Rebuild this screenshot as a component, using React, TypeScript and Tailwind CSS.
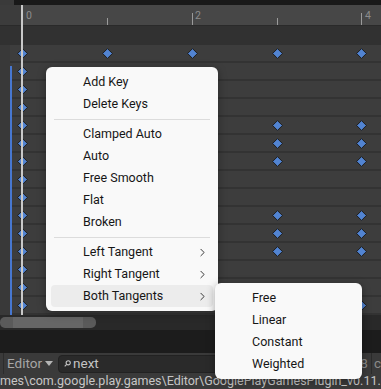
import { ChevronRight } from 'lucide-react'

const FONT = "Roboto, 'Noto Sans', sans-serif"

// key columns on the curve canvas (x, px)
const COLS = [22, 107, 192, 277, 361]

// which extra columns (besides the playhead column) carry keys in each row
const ROWS: number[][] = [
  [107, 192, 277, 361],
  [], [], [],
  [277, 361], [277, 361], [277, 361],
  [], [],
  [277, 361], [277, 361], [277, 361],
  [], [],
  [277, 361],
]

function Key({ x }: { x: number }) {
  return (
    <svg
      width="11"
      height="11"
      viewBox="0 0 11 11"
      className="absolute top-[3px]"
      style={{ left: x - 5.5 }}
    >
      <polygon points="5.5,0.6 10.4,5.5 5.5,10.4 0.6,5.5" fill="#5284d2" stroke="#1c1c1c" strokeWidth="1" />
    </svg>
  )
}

function MenuItem({ label, sub, active }: { label: string; sub?: boolean; active?: boolean }) {
  return (
    <div
      className={`mx-[5px] h-[22px] rounded-[4px] flex items-center pl-[32px] pr-[4px] ${active ? 'bg-[#ececec]' : ''}`}
    >
      <span className="flex-1 text-[12.5px] text-[#161616] leading-none">{label}</span>
      {sub && <ChevronRight size={13} strokeWidth={1.7} className="text-[#2a2a2a]" />}
    </div>
  )
}

function Sep() {
  return (
    <div className="h-[8px] flex items-center px-[8px]">
      <div className="h-px flex-1 bg-[#dcdcdc]" />
    </div>
  )
}

export default function App() {
  return (
    <div
      className="w-[381px] h-[389px] relative overflow-hidden bg-[#383838] flex flex-col"
      style={{ fontFamily: FONT }}
    >
      {/* top strip */}
      <div className="h-[5px] flex">
        <div className="w-[14px] bg-[#3a3a3a]" />
        <div className="flex-1 bg-[#191919]" />
      </div>

      {/* time ruler */}
      <div className="h-[21px] flex border-b border-[#2a2a2a]">
        <div className="w-[22px] bg-[#3c3c3c]" />
        <div className="flex-1 bg-[#474747] relative text-[10.5px] text-[#8c8c8c] leading-none">
          <div className="absolute left-[85px] top-[13px] w-px h-[7px] bg-[#9a9a9a]" />
          <div className="absolute left-[170px] top-[8px] w-px h-[12px] bg-[#9a9a9a]" />
          <div className="absolute left-[255px] top-[13px] w-px h-[7px] bg-[#9a9a9a]" />
          <div className="absolute left-[339px] top-[8px] w-px h-[12px] bg-[#9a9a9a]" />
          <span className="absolute left-[4px] top-[6px]">0</span>
          <span className="absolute left-[173px] top-[6px]">2</span>
          <span className="absolute left-[343px] top-[6px]">4</span>
        </div>
      </div>

      {/* header band */}
      <div className="h-[19px] bg-[#313131]" />

      {/* curve rows */}
      <div className="relative">
        {COLS.slice(3).map(x => (
          <div key={x} className="absolute top-[10px] bottom-0 w-px bg-[#5a5a5a]" style={{ left: x }} />
        ))}
        {COLS.slice(1, 3).map(x => (
          <div key={x} className="absolute top-[10px] h-[12px] w-px bg-[#5a5a5a]" style={{ left: x }} />
        ))}
        {ROWS.map((keys, i) => (
          <div key={i} className="relative h-[18px] flex">
            <div className="w-[10px] bg-[#393939]" />
            <div className="flex-1 bg-[#3d3d3d] border-b-2 border-[#333333]" />
            <Key x={22} />
            {keys.map(x => <Key key={x} x={x} />)}
          </div>
        ))}
        <div className="absolute left-[10px] top-[21px] bottom-0 w-[2px] bg-[#4777d0]" />
        <div className="absolute left-[21px] -top-[40px] bottom-0 w-[2px] bg-[#c9c9c9]" />
      </div>

      {/* horizontal scrollbar */}
      <div className="h-[15px] bg-[#292929] pt-[2px]">
        <div className="w-[96px] h-[11px] rounded-[5px] bg-[#5a5a5a] flex px-[13px]">
          <div className="flex-1 bg-[#666666]" />
        </div>
      </div>

      <div className="h-[23px] bg-[#1c1c1c]" />

      {/* console toolbar */}
      <div className="h-[21px] bg-[#3a3a3a] flex items-center text-[13.5px] text-[#a6a6a6]">
        <div className="w-px h-full bg-[#2c2c2c] ml-[3px]" />
        <span className="ml-[3px]">Editor</span>
        <svg width="8" height="5" viewBox="0 0 8 5" className="ml-[3px]">
          <polygon points="0,0 8,0 4,5" fill="#b5b5b5" />
        </svg>
        <div className="ml-[5px] flex-1 h-[18px] rounded-[4px] bg-[#2a2a2a] border border-[#222] flex items-center pl-[5px] text-[#c4c4c4]">
          <svg width="7" height="7" viewBox="0 0 8 8" fill="none" stroke="#c4c4c4" strokeWidth="1.3">
            <circle cx="4.8" cy="3.2" r="2.4" />
            <path d="M3 5 L0.8 7.2" />
          </svg>
          <span className="ml-[2px]">next</span>
        </div>
        <span className="ml-[3px] text-[#8a8a8a]">8</span>
        <div className="w-px h-full bg-[#2c2c2c] ml-[3px] mr-[2px]" />
        <span className="text-[#8a8a8a]">c</span>
      </div>

      {/* path line */}
      <div className="flex-1 bg-[#3a3a3a] text-[12.5px] leading-[14px] text-[#c6c6c6] whitespace-nowrap overflow-hidden">
        mes\com.google.play.games\Editor\GooglePlayGamesPlugin_v0.11.0
      </div>

      {/* context menu */}
      <div className="absolute left-[46px] top-[67px] w-[172px] py-[4px] bg-[#f9f9f9] rounded-[6px] shadow-[0_2px_8px_rgba(0,0,0,0.35)]">
        <MenuItem label="Add Key" />
        <MenuItem label="Delete Keys" />
        <Sep />
        <MenuItem label="Clamped Auto" />
        <MenuItem label="Auto" />
        <MenuItem label="Free Smooth" />
        <MenuItem label="Flat" />
        <MenuItem label="Broken" />
        <Sep />
        <MenuItem label="Left Tangent" sub />
        <MenuItem label="Right Tangent" sub />
        <MenuItem label="Both Tangents" sub active />
      </div>

      {/* tangent submenu */}
      <div className="absolute left-[215px] top-[283px] w-[147px] py-[4px] bg-[#f9f9f9] rounded-[6px] shadow-[0_2px_8px_rgba(0,0,0,0.35)]">
        <MenuItem label="Free" />
        <MenuItem label="Linear" />
        <MenuItem label="Constant" />
        <MenuItem label="Weighted" />
      </div>
    </div>
  )
}
